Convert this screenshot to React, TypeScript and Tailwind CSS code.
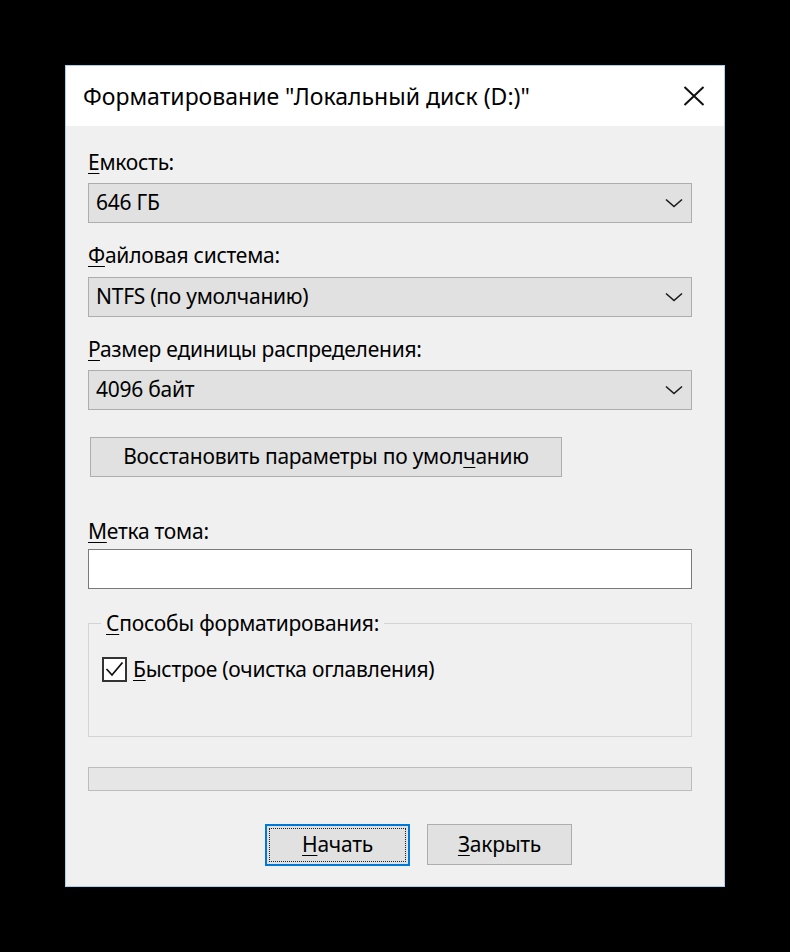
import type { ReactNode } from "react";

const FONT = { fontFamily: '"Noto Sans", "Open Sans", sans-serif' };

function U({ children }: { children: ReactNode }) {
  return <span className="underline decoration-1 underline-offset-[3px]">{children}</span>;
}

function Chevron() {
  return (
    <svg width="18" height="10" viewBox="0 0 18 10" fill="none" stroke="#1a1a1a" strokeWidth="1.6">
      <path d="M1 1.5l8 7 8-7" />
    </svg>
  );
}

function Combo({ value }: { value: string }) {
  return (
    <div className="flex h-[40px] w-[604px] items-center justify-between border border-[#adadad] bg-[#e1e1e1] pl-[7px] pr-[8px]">
      <span>{value}</span>
      <Chevron />
    </div>
  );
}

function Label({ children, className = "" }: { children: ReactNode; className?: string }) {
  return <div className={`h-[28px] leading-[28px] ${className}`}>{children}</div>;
}

export default function App() {
  return (
    <div className="min-h-[952px] w-[790px] bg-black pl-[65px] pt-[65px]" style={FONT}>
      <div className="flex h-[822px] w-[660px] flex-col border border-[#9fd4ee] bg-[#f0f0f0] text-[21px] tracking-[-0.25px] text-black">
        {/* title bar */}
        <div className="flex h-[60px] shrink-0 items-center justify-between bg-white pl-[17px] pr-[19px]">
          <span className="text-[23px] tracking-normal">Форматирование "Локальный диск (D:)"</span>
          <svg width="22" height="20" viewBox="0 0 22 20" fill="none" stroke="#111" strokeWidth="2">
            <path d="M1.5 1l19 18M20.5 1l-19 18" />
          </svg>
        </div>

        <div className="flex flex-col pl-[22px]">
          <Label className="mt-[22px]">
            <U>Е</U>мкость:
          </Label>
          <div className="mt-[7px]">
            <Combo value="646 ГБ" />
          </div>

          <Label className="mt-[18px]">
            <U>Ф</U>айловая система:
          </Label>
          <div className="mt-[8px]">
            <Combo value="NTFS (по умолчанию)" />
          </div>

          <Label className="mt-[18px]">
            <U>Р</U>азмер единицы распределения:
          </Label>
          <div className="mt-[7px]">
            <Combo value="4096 байт" />
          </div>

          <button
            type="button"
            className="ml-[2px] mt-[27px] h-[40px] w-[472px] border border-[#adadad] bg-[#e1e1e1] text-center"
          >
            Восстановить параметры по умол<U>ч</U>анию
          </button>

          <Label className="mt-[40px]">
            <U>М</U>етка тома:
          </Label>
          <div className="mt-[4px] h-[40px] w-[604px] border border-[#7a7a7a] bg-white" />

          <div className="relative mt-[34px] h-[114px] w-[604px] border border-[#d4d4d4]">
            <span className="absolute left-[12px] top-[-15px] bg-[#f0f0f0] px-[5px] leading-[28px]">
              <U>С</U>пособы форматирования:
            </span>
            <div className="ml-[13px] mt-[31px] flex items-center gap-[6px]">
              <span className="flex h-[25px] w-[25px] items-center justify-center border-2 border-[#333] bg-white">
                <svg width="19" height="16" viewBox="0 0 19 16" fill="none" stroke="#111" strokeWidth="1.8">
                  <path d="M1.5 8l5.5 6L17.5 1.5" />
                </svg>
              </span>
              <span className="leading-[28px]">
                <U>Б</U>ыстрое (очистка оглавления)
              </span>
            </div>
          </div>

          <div className="mt-[30px] h-[24px] w-[604px] border border-[#bcbcbc] bg-[#e6e6e6]" />

          <div className="mt-[33px] flex gap-[17px] pl-[177px]">
            <button
              type="button"
              className="flex h-[42px] w-[145px] items-center justify-center border-2 border-[#0078d7] bg-[#e1e1e1] p-[2px]"
            >
              <span className="flex h-full w-full items-center justify-center border border-dotted border-[#222]">
                <U>Н</U>ачать
              </span>
            </button>
            <button
              type="button"
              className="flex h-[41px] w-[145px] items-center justify-center border border-[#adadad] bg-[#e1e1e1]"
            >
              <U>З</U>акрыть
            </button>
          </div>
        </div>
      </div>
    </div>
  );
}
